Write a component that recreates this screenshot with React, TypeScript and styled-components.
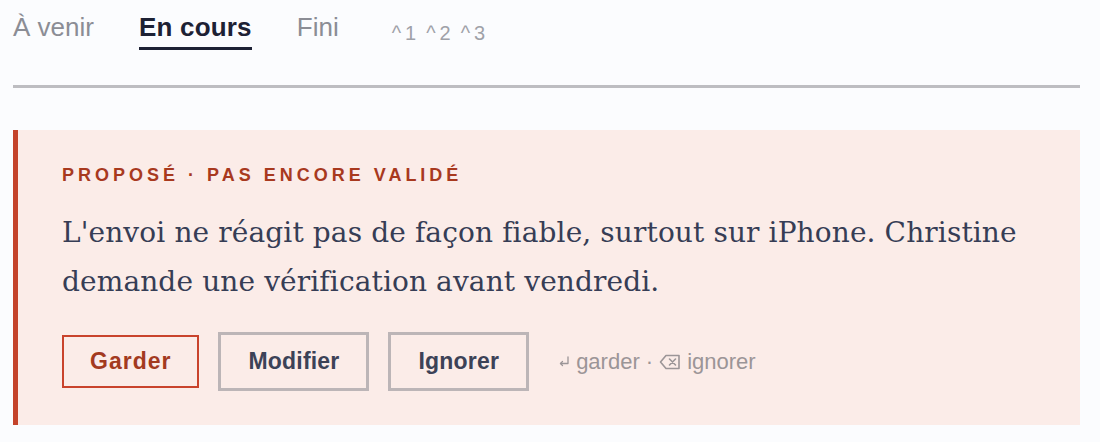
import styled, { createGlobalStyle } from 'styled-components';

const GlobalStyle = createGlobalStyle`
    html, body {
        margin: 0;
        padding: 0;
        background: #fbfcfe;
    }
    body {
        font-family: "Liberation Sans", Arial, sans-serif;
    }
`

const Page = styled.main`
    padding: 12px 20px 0 13px;
`

const TabBar = styled.nav`
    display: flex;
    align-items: flex-start;
    gap: 45px;
    padding-bottom: 35px;
    border-bottom: 3px solid #bdbdc1;
`

const Tab = styled.button<{ $active?: boolean }>`
    appearance: none;
    background: none;
    border: none;
    border-bottom: 3px solid ${p => (p.$active ? '#1d2134' : 'transparent')};
    padding: 0 0 5px 0;
    margin: 0;
    font-family: "Liberation Sans", Arial, sans-serif;
    font-size: 26px;
    line-height: 30px;
    font-weight: ${p => (p.$active ? 700 : 400)};
    letter-spacing: ${p => (p.$active ? '0.2px' : '0')};
    color: ${p => (p.$active ? '#1d2134' : '#8b8d95')};
    cursor: pointer;
`

const Shortcuts = styled.div`
    display: flex;
    gap: 6px;
    margin-left: 8px;
    margin-top: 9px;
`

const Kbd = styled.span`
    font-size: 20px;
    line-height: 24px;
    letter-spacing: 4px;
    color: #9fa1a8;
`

const Card = styled.section`
    margin-top: 42px;
    background: #fbece8;
    border-left: 5px solid #c4432b;
    padding: 35px 44px 34px;
`

const Label = styled.p`
    margin: 0;
    font-size: 18px;
    line-height: 20px;
    font-weight: 700;
    letter-spacing: 4px;
    text-transform: uppercase;
    color: #a8391e;
`

const Body = styled.p`
    margin: 23px 0 0;
    font-family: "DejaVu Serif", "Liberation Serif", serif;
    font-size: 28px;
    line-height: 49px;
    letter-spacing: 0.12px;
    color: #363d55;
`

const Actions = styled.div`
    display: flex;
    align-items: center;
    gap: 19px;
    margin-top: 26px;
`

const Button = styled.button<{ $primary?: boolean }>`
    appearance: none;
    background: transparent;
    height: ${p => (p.$primary ? '53px' : '59px')};
    padding: 0 ${p => (p.$primary ? '26px' : '27px')};
    border: ${p => (p.$primary ? '2px solid #c9432c' : '3px solid #bcb5b7')};
    font-family: "Liberation Sans", Arial, sans-serif;
    font-size: 23px;
    font-weight: 700;
    letter-spacing: ${p => (p.$primary ? '1px' : '0.2px')};
    color: ${p => (p.$primary ? '#a33a1f' : '#3c4257')};
    cursor: pointer;
`

const Hint = styled.div`
    display: flex;
    align-items: center;
    gap: 6px;
    margin-left: 10px;
    font-size: 22px;
    color: #9b9597;
    svg {
        flex: none;
    }
`

const ReturnIcon = () => (
    <svg width="12" height="11" viewBox="0 0 12 11" fill="none" stroke="#9b9597" strokeWidth="1.3" strokeLinecap="round" strokeLinejoin="round">
        <path d="M10 1v6.5H2.5" />
        <path d="M4.5 5.5 2.5 7.5l2 2" />
    </svg>
)

const BackspaceIcon = () => (
    <svg width="22" height="16" viewBox="0 0 22 16" fill="none" stroke="#9b9597" strokeWidth="1.6" strokeLinejoin="round" strokeLinecap="round">
        <path d="M7 1.5h13v13H7L1.5 8z" />
        <path d="M10.5 5l6 6M16.5 5l-6 6" />
    </svg>
)

export default function App() {
    return (
        <>
            <GlobalStyle />
            <Page>
                <TabBar>
                    <Tab>À venir</Tab>
                    <Tab $active>En cours</Tab>
                    <Tab>Fini</Tab>
                    <Shortcuts>
                        <Kbd>^1</Kbd>
                        <Kbd>^2</Kbd>
                        <Kbd>^3</Kbd>
                    </Shortcuts>
                </TabBar>
                <Card>
                    <Label>Proposé · pas encore validé</Label>
                    <Body>
                        L'envoi ne réagit pas de façon fiable, surtout sur iPhone. Christine demande une vérification avant vendredi.
                    </Body>
                    <Actions>
                        <Button $primary>Garder</Button>
                        <Button>Modifier</Button>
                        <Button>Ignorer</Button>
                        <Hint>
                            <ReturnIcon />
                            <span>garder ·</span>
                            <BackspaceIcon />
                            <span>ignorer</span>
                        </Hint>
                    </Actions>
                </Card>
            </Page>
        </>
    )
}
